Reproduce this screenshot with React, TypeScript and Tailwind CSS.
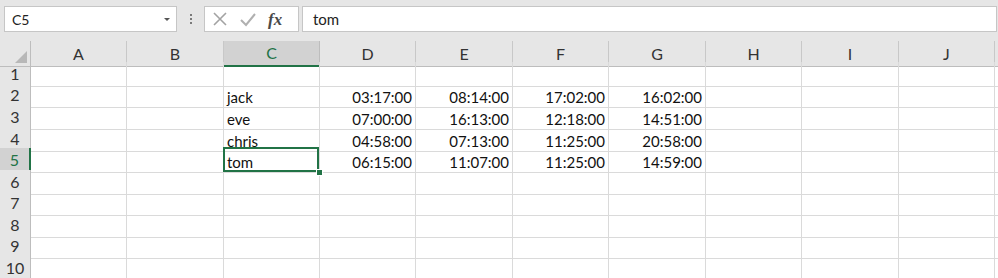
const cols = ["A", "B", "C", "D", "E", "F", "G", "H", "I", "J"];
const rowHeights = ["h-[21px]", "h-[22px]", "h-[22px]", "h-[21px]", "h-[22px]", "h-[21px]", "h-[22px]", "h-[21px]", "h-[22px]", "h-[21px]"];

const data: Record<number, string[]> = {
  2: ["jack", "03:17:00", "08:14:00", "17:02:00", "16:02:00"],
  3: ["eve", "07:00:00", "16:13:00", "12:18:00", "14:51:00"],
  4: ["chris", "04:58:00", "07:13:00", "11:25:00", "20:58:00"],
  5: ["tom", "06:15:00", "11:07:00", "11:25:00", "14:59:00"],
};

const gridCols = "grid grid-cols-[31px_96px_97px_96px_96px_97px_96px_97px_96px_97px_96px_3px]";

const Toolbar = () => (
  <div className="h-[41px] bg-[#e6e6e6] flex items-start pt-[6px]">
    <div className="ml-[4px] w-[173px] h-[26px] bg-white border border-[#c6c6c6] flex items-center justify-between pl-[7px] pr-[5px] text-[14px] text-[#222]">
      <span>C5</span>
      <span className="w-0 h-0 border-l-[3px] border-r-[3px] border-t-[3px] border-l-transparent border-r-transparent border-t-[#555] mr-[1px]" />
    </div>
    <div className="w-[27px] h-[26px] flex flex-col items-center justify-center gap-[2px]">
      <span className="w-[2px] h-[2px] bg-[#7a7a7a]" />
      <span className="w-[2px] h-[2px] bg-[#7a7a7a]" />
      <span className="w-[2px] h-[2px] bg-[#7a7a7a]" />
    </div>
    <div className="w-[95px] h-[26px] bg-white border border-[#c6c6c6] flex items-center">
      <svg width="16" height="16" viewBox="0 0 16 16" className="ml-[7px]">
        <path d="M2 2 L14 14 M14 2 L2 14" stroke="#a3a3a3" strokeWidth="1.6" fill="none" />
      </svg>
      <svg width="18" height="16" viewBox="0 0 18 16" className="ml-[11px]">
        <path d="M2 9 L7 14 L16 3" stroke="#b0b0b0" strokeWidth="2" fill="none" />
      </svg>
      <span className="ml-[11px] text-[17px] italic font-bold text-[#4a4a4a] leading-none" style={{ fontFamily: '"Liberation Serif", serif' }}>
        fx
      </span>
    </div>
    <div className="ml-[3px] flex-1 mr-[1px] h-[26px] bg-white border border-[#c6c6c6] flex items-center pl-[10px] text-[15px] text-[#222]">
      tom
    </div>
  </div>
);

export default function App() {
  return (
    <div className="w-[998px] h-[278px] overflow-hidden bg-white" style={{ fontFamily: "Lato, 'Open Sans', sans-serif" }}>
      <Toolbar />
      <div className={`${gridCols} h-[21px]`}>
        <div className="bg-[#e6e6e6] border-r border-b border-[#bdbdbd] relative">
          <svg width="12" height="12" viewBox="0 0 12 12" className="absolute right-[3px] bottom-[3px]">
            <path d="M12 0 L12 12 L0 12 Z" fill="#b8b8b8" />
          </svg>
        </div>
        {cols.map((c) =>
          c === "C" ? (
            <div key={c} className="bg-[#d2d2d2] border-r border-[#bdbdbd] border-b-2 border-b-[#217346] flex items-center justify-center text-[16px] text-[#217346]">
              {c}
            </div>
          ) : (
            <div key={c} className="bg-[#e6e6e6] border-r border-b border-[#c8c8c8] border-b-[#bdbdbd] flex items-center justify-center text-[16px] text-[#333]">
              {c}
            </div>
          )
        )}
        <div className="bg-[#e6e6e6] border-b border-[#bdbdbd]" />
      </div>
      {rowHeights.map((h, i) => {
        const r = i + 1;
        const vals = data[r];
        const sel = r === 5;
        return (
          <div key={r} className={`${gridCols} ${h}`}>
            <div
              className={
                sel
                  ? "bg-[#d2d2d2] border-b border-[#c8c8c8] border-r-2 border-r-[#217346] flex items-center justify-center text-[16px] text-[#217346]"
                  : "bg-[#e6e6e6] border-b border-[#cfcfcf] border-r border-r-[#bdbdbd] flex items-center justify-center text-[16px] text-[#333]"
              }
            >
              {r}
            </div>
            {cols.map((c, ci) => {
              let text = "";
              if (vals && ci >= 2 && ci <= 6) text = vals[ci - 2];
              const right = ci > 2;
              return (
                <div
                  key={c}
                  className={`relative border-r border-b border-[#dadada] flex items-end pb-[1px] text-[15px] text-[#111] leading-[18px] ${right ? "justify-end pr-[3px]" : "pl-[3px]"}`}
                >
                  {text}
                  {sel && c === "C" && (
                    <>
                      <span className="absolute z-10 -left-[1px] -top-[1px] right-0 bottom-0 border-2 border-[#217346]" />
                      <span className="absolute z-10 -right-[4px] -bottom-[4px] w-[7px] h-[7px] bg-[#217346] border border-white" />
                    </>
                  )}
                </div>
              );
            })}
            <div className="border-b border-[#dadada]" />
          </div>
        );
      })}
    </div>
  );
}
